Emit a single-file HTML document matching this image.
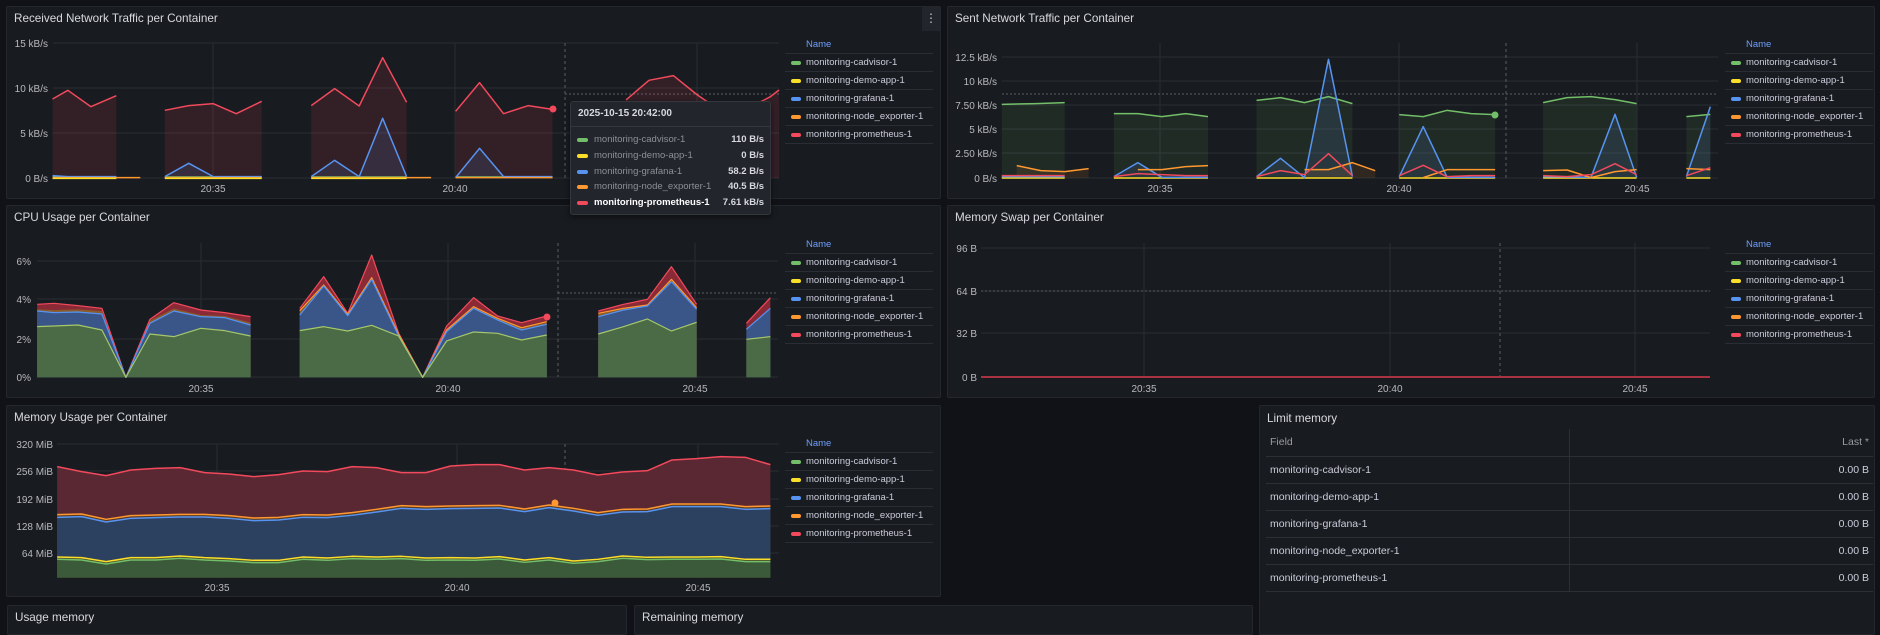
<!DOCTYPE html>
<html><head><meta charset="utf-8">
<style>
*{box-sizing:border-box;margin:0;padding:0}
html,body{width:1880px;height:623px;overflow:hidden;background:#111217;font-family:"Liberation Sans",sans-serif;color:#ccccdc}
.p{position:absolute;background:#181b1f;border:1px solid #24272d;border-radius:2px}
.t{position:absolute;left:7px;top:5px;font-size:11.7px;color:#d8d9e0}
.lg{position:absolute;width:148px;font-size:9.5px}
.lg .h{height:18px;line-height:18px;padding-left:21px;color:#6e9fff;border-bottom:1px solid #2a2d33}
.lg .r{height:18px;line-height:18px;padding-left:21px;border-bottom:1px solid #2a2d33;position:relative;color:#ccccdc}
.lg .r i{position:absolute;left:6px;top:7px;width:10px;height:4px;border-radius:2px}
.g{background:#73bf69}.y{background:#fade2a}.b{background:#5794f2}.o{background:#ff9830}.rd{background:#f2495c}
svg{position:absolute;left:0;top:0}
.tt{position:absolute;left:570px;top:101px;width:201px;height:114px;background:#22252b;border:1px solid #34373e;border-radius:3px;font-size:9.5px;box-shadow:0 2px 6px rgba(0,0,0,.5)}
.tt .hd{height:25px;line-height:23px;padding-left:7px;font-weight:bold;font-size:10px;color:#d8d9e0;border-bottom:1px solid #34373e}
.tt .r{position:absolute;left:0;width:100%;height:14px;line-height:14px}
.tt .r i{position:absolute;left:6px;top:5px;width:11px;height:4px;border-radius:2px}
.tt .r span{position:absolute;left:23px;color:#8e8f98}
.tt .r b{position:absolute;right:6px;font-weight:bold;color:#d8d9e0}
table{position:absolute;left:6px;top:23px;width:607px;border-collapse:collapse;font-size:10.5px;table-layout:fixed}
td{height:27px;border-bottom:1px solid #2c2f35;padding:0 4px;color:#ccccdc}
td:first-child{width:303px}
td+td{text-align:right;border-left:1px solid #2c2f35}
</style></head><body>

<div class="p" style="left:6px;top:6px;width:935px;height:193px"><div class="t">Received Network Traffic per Container</div>
<div style="position:absolute;right:0;top:0;width:18px;height:24px;background:#22252b;color:#ccc;font-size:12px;text-align:center;line-height:22px">⋮</div></div>
<div class="p" style="left:947px;top:6px;width:928px;height:193px"><div class="t">Sent Network Traffic per Container</div></div>
<div class="p" style="left:6px;top:205px;width:935px;height:193px"><div class="t">CPU Usage per Container</div></div>
<div class="p" style="left:947px;top:205px;width:928px;height:193px"><div class="t">Memory Swap per Container</div></div>
<div class="p" style="left:6px;top:405px;width:935px;height:192px"><div class="t">Memory Usage per Container</div></div>
<div class="p" style="left:1259px;top:405px;width:616px;height:230px"><div class="t" style="top:6px">Limit memory</div>
<table>
<tr><td style="color:#9a9ba3">Field</td><td style="color:#9a9ba3">Last *</td></tr>
<tr><td>monitoring-cadvisor-1</td><td>0.00 B</td></tr>
<tr><td>monitoring-demo-app-1</td><td>0.00 B</td></tr>
<tr><td>monitoring-grafana-1</td><td>0.00 B</td></tr>
<tr><td>monitoring-node_exporter-1</td><td>0.00 B</td></tr>
<tr><td>monitoring-prometheus-1</td><td>0.00 B</td></tr>
</table></div>
<div class="p" style="left:7px;top:605px;width:620px;height:30px"><div class="t" style="top:5px">Usage memory</div></div>
<div class="p" style="left:634px;top:605px;width:619px;height:30px"><div class="t" style="top:5px">Remaining memory</div></div>

<!-- legends -->
<div class="lg" style="left:785px;top:36px"><div class="h">Name</div><div class="r"><i class="g"></i>monitoring-cadvisor-1</div><div class="r"><i class="y"></i>monitoring-demo-app-1</div><div class="r"><i class="b"></i>monitoring-grafana-1</div><div class="r"><i class="o"></i>monitoring-node_exporter-1</div><div class="r"><i class="rd"></i>monitoring-prometheus-1</div></div>
<div class="lg" style="left:1725px;top:36px"><div class="h">Name</div><div class="r"><i class="g"></i>monitoring-cadvisor-1</div><div class="r"><i class="y"></i>monitoring-demo-app-1</div><div class="r"><i class="b"></i>monitoring-grafana-1</div><div class="r"><i class="o"></i>monitoring-node_exporter-1</div><div class="r"><i class="rd"></i>monitoring-prometheus-1</div></div>
<div class="lg" style="left:785px;top:236px"><div class="h">Name</div><div class="r"><i class="g"></i>monitoring-cadvisor-1</div><div class="r"><i class="y"></i>monitoring-demo-app-1</div><div class="r"><i class="b"></i>monitoring-grafana-1</div><div class="r"><i class="o"></i>monitoring-node_exporter-1</div><div class="r"><i class="rd"></i>monitoring-prometheus-1</div></div>
<div class="lg" style="left:1725px;top:236px"><div class="h">Name</div><div class="r"><i class="g"></i>monitoring-cadvisor-1</div><div class="r"><i class="y"></i>monitoring-demo-app-1</div><div class="r"><i class="b"></i>monitoring-grafana-1</div><div class="r"><i class="o"></i>monitoring-node_exporter-1</div><div class="r"><i class="rd"></i>monitoring-prometheus-1</div></div>
<div class="lg" style="left:785px;top:435px"><div class="h">Name</div><div class="r"><i class="g"></i>monitoring-cadvisor-1</div><div class="r"><i class="y"></i>monitoring-demo-app-1</div><div class="r"><i class="b"></i>monitoring-grafana-1</div><div class="r"><i class="o"></i>monitoring-node_exporter-1</div><div class="r"><i class="rd"></i>monitoring-prometheus-1</div></div>

<svg width="1880" height="623" font-family="Liberation Sans, sans-serif" font-size="10" fill="#b8b9c0">
<g stroke="#2a2d33" stroke-width="1">
<path d="M53 43H779M53 88H779M53 133H779M53 178H779M213 43V178M455 43V178M697 43V178"/>
<path d="M1002 57H1718M1002 81H1718M1002 105H1718M1002 129H1718M1002 153H1718M1002 178H1718M1160 43V178M1399 43V178M1637 43V178"/>
<path d="M37 261H778M37 299H778M37 339H778M37 377H778M201 243V377M448 243V377M695 243V377"/>
<path d="M981 248H1710M981 291H1710M981 333H1710M981 377H1710M1144 243V377M1390 243V377M1635 243V377"/>
<path d="M57 444H779M57 471H779M57 499H779M57 526H779M57 553H779M217 444V578M457 444V578M698 444V578"/>
</g>
<g stroke="#5a5c63" stroke-width="1" stroke-dasharray="3,3">
<path d="M565 43V178M1506 43V178M558 243V377M1500 243V377M565 444V578"/>
<path d="M565 94H779M1002 94H1718M558 293H778M981 291H1710M565 492H770" stroke-dasharray="2,2"/>
</g>

<g text-anchor="end">
<text x="48" y="47">15 kB/s</text><text x="48" y="92">10 kB/s</text><text x="48" y="137">5 kB/s</text><text x="48" y="182">0 B/s</text>
<text x="997" y="61">12.5 kB/s</text><text x="997" y="85">10 kB/s</text><text x="997" y="109">7.50 kB/s</text><text x="997" y="133">5 kB/s</text><text x="997" y="157">2.50 kB/s</text><text x="997" y="182">0 B/s</text>
<text x="31" y="265">6%</text><text x="31" y="303">4%</text><text x="31" y="343">2%</text><text x="31" y="381">0%</text>
<text x="977" y="252">96 B</text><text x="977" y="295">64 B</text><text x="977" y="337">32 B</text><text x="977" y="381">0 B</text>
<text x="53" y="448">320 MiB</text><text x="53" y="475">256 MiB</text><text x="53" y="503">192 MiB</text><text x="53" y="530">128 MiB</text><text x="53" y="557">64 MiB</text>
</g>
<g text-anchor="middle">
<text x="213" y="192">20:35</text><text x="455" y="192">20:40</text>
<text x="1160" y="192">20:35</text><text x="1399" y="192">20:40</text><text x="1637" y="192">20:45</text>
<text x="201" y="392">20:35</text><text x="448" y="392">20:40</text><text x="695" y="392">20:45</text>
<text x="1144" y="392">20:35</text><text x="1390" y="392">20:40</text><text x="1635" y="392">20:45</text>
<text x="217" y="591">20:35</text><text x="457" y="591">20:40</text><text x="698" y="591">20:45</text>
</g>

<!-- RECEIVED -->
<g transform="scale(0.5102,0.3333)" stroke-width="1.5" fill="none" stroke-linejoin="round">
<g fill="rgba(242,73,92,0.12)" stroke="none">
<polygon points="103,297 133,271 178,320 228,287 228,534 103,534"/>
<polygon points="323,331 370,317 418,311 463,341 513,304 513,534 323,534"/>
<polygon points="610,317 656,266 704,318 750,173 797,307 797,534 610,534"/>
<polygon points="893,334 940,248 987,341 1035,317 1083,328 1083,534 893,534"/>
<polygon points="1227,300 1272,241 1320,227 1367,285 1420,340 1460,330 1510,290 1527,270 1527,534 1227,534"/>
</g>
<g fill="rgba(87,148,242,0.12)" stroke="none">
<polygon points="323,530 370,490 418,530"/><polygon points="610,530 656,481 704,530 750,355 797,530"/><polygon points="893,533 940,445 987,530"/>
</g>
<g stroke="#f2495c">
<polyline vector-effect="non-scaling-stroke" points="103,297 133,271 178,320 228,287"/>
<polyline vector-effect="non-scaling-stroke" points="323,331 370,317 418,311 463,341 513,304"/>
<polyline vector-effect="non-scaling-stroke" points="610,317 656,266 704,318 750,173 797,307"/>
<polyline vector-effect="non-scaling-stroke" points="893,334 940,248 987,341 1035,317 1083,328"/>
<polyline vector-effect="non-scaling-stroke" points="1227,300 1272,241 1320,227 1367,285 1420,340 1460,330 1510,290 1527,270"/>
</g>
<g stroke="#73bf69"><polyline vector-effect="non-scaling-stroke" points="103,531 228,531"/><polyline vector-effect="non-scaling-stroke" points="323,531 513,531"/><polyline vector-effect="non-scaling-stroke" points="610,531 797,531"/><polyline vector-effect="non-scaling-stroke" points="893,531 1083,531"/></g>
<g stroke="#5794f2">
<polyline vector-effect="non-scaling-stroke" points="103,527 133,530 228,530"/>
<polyline vector-effect="non-scaling-stroke" points="323,530 370,490 418,530 513,530"/>
<polyline vector-effect="non-scaling-stroke" points="610,530 656,481 704,530 750,355 797,530"/>
<polyline vector-effect="non-scaling-stroke" points="893,533 940,445 987,530 1083,530"/>
</g>
<g stroke="#ff9830"><polyline vector-effect="non-scaling-stroke" points="103,533 275,533"/><polyline vector-effect="non-scaling-stroke" points="323,533 513,533"/><polyline vector-effect="non-scaling-stroke" points="610,533 845,533"/><polyline vector-effect="non-scaling-stroke" points="893,533 1083,533"/></g>
<g stroke="#fade2a"><polyline vector-effect="non-scaling-stroke" points="103,535 228,535"/><polyline vector-effect="non-scaling-stroke" points="323,535 513,535"/><polyline vector-effect="non-scaling-stroke" points="610,535 797,535"/></g>
</g>
<circle cx="553" cy="109" r="3.5" fill="#f2495c"/>

<!-- SENT -->
<g transform="translate(940,0) scale(0.5995,0.3333)" fill="none" stroke-width="1.5" stroke-linejoin="round">
<g fill="rgba(115,191,105,0.1)" stroke="none">
<polygon points="103,313 160,311 208,308 208,534 103,534"/>
<polygon points="290,341 330,341 370,350 410,341 447,350 447,534 290,534"/>
<polygon points="528,301 568,293 608,308 648,290 688,311 688,534 528,534"/>
<polygon points="766,344 806,350 846,331 886,341 926,344 926,534 766,534"/>
<polygon points="1006,308 1046,293 1086,290 1126,299 1162,311 1162,534 1006,534"/>
<polygon points="1245,350 1285,343 1285,534 1245,534"/>
</g>
<g fill="rgba(87,148,242,0.12)" stroke="none">
<polygon points="290,530 330,488 370,532"/><polygon points="528,530 568,475 608,533 648,178 688,530"/><polygon points="766,530 806,380 846,532"/><polygon points="1086,532 1126,343 1162,532"/><polygon points="1245,530 1285,320 1285,534"/>
</g>
<g fill="rgba(255,152,48,0.1)" stroke="none">
<polygon points="128,497 168,512 208,515 248,506 248,534 128,534"/><polygon points="608,509 648,509 688,488 726,512 726,534 608,534"/>
</g>
<g stroke="#73bf69">
<polyline vector-effect="non-scaling-stroke" points="103,313 160,311 208,308"/>
<polyline vector-effect="non-scaling-stroke" points="290,341 330,341 370,350 410,341 447,350"/>
<polyline vector-effect="non-scaling-stroke" points="528,301 568,293 608,308 648,290 688,311"/>
<polyline vector-effect="non-scaling-stroke" points="766,344 806,350 846,331 886,341 926,344"/>
<polyline vector-effect="non-scaling-stroke" points="1006,308 1046,293 1086,290 1126,299 1162,311"/>
<polyline vector-effect="non-scaling-stroke" points="1245,350 1285,343"/>
</g>
<g stroke="#fade2a">
<polyline vector-effect="non-scaling-stroke" points="103,534 208,534"/><polyline vector-effect="non-scaling-stroke" points="290,534 447,534"/><polyline vector-effect="non-scaling-stroke" points="528,534 688,534"/><polyline vector-effect="non-scaling-stroke" points="766,534 926,534"/><polyline vector-effect="non-scaling-stroke" points="1006,534 1162,534"/><polyline vector-effect="non-scaling-stroke" points="1245,534 1285,534"/>
</g>
<g stroke="#5794f2">
<polyline vector-effect="non-scaling-stroke" points="103,530 208,530"/>
<polyline vector-effect="non-scaling-stroke" points="290,530 330,488 370,532 447,532"/>
<polyline vector-effect="non-scaling-stroke" points="528,530 568,475 608,533 648,178 688,530"/>
<polyline vector-effect="non-scaling-stroke" points="766,530 806,380 846,532 926,532"/>
<polyline vector-effect="non-scaling-stroke" points="1006,530 1086,532 1126,343 1162,532"/>
<polyline vector-effect="non-scaling-stroke" points="1245,530 1285,320"/>
</g>
<g stroke="#ff9830">
<polyline vector-effect="non-scaling-stroke" points="128,497 168,512 208,515 248,506"/>
<polyline vector-effect="non-scaling-stroke" points="330,509 370,509 410,500 447,497"/>
<polyline vector-effect="non-scaling-stroke" points="608,509 648,509 688,488 726,512"/>
<polyline vector-effect="non-scaling-stroke" points="806,533 846,509 926,509"/>
<polyline vector-effect="non-scaling-stroke" points="1006,512 1046,510 1086,533 1126,515 1162,509"/>
<polyline vector-effect="non-scaling-stroke" points="1245,506 1285,509"/>
</g>
<g stroke="#f2495c">
<polyline vector-effect="non-scaling-stroke" points="103,527 208,527"/>
<polyline vector-effect="non-scaling-stroke" points="290,530 330,521 370,524 410,527 447,527"/>
<polyline vector-effect="non-scaling-stroke" points="528,530 568,512 608,524 648,461 688,527"/>
<polyline vector-effect="non-scaling-stroke" points="766,527 806,496 846,530 886,527 926,527"/>
<polyline vector-effect="non-scaling-stroke" points="1006,527 1046,530 1086,524 1126,491 1162,524"/>
<polyline vector-effect="non-scaling-stroke" points="1245,527 1285,503"/>
</g>
</g>
<circle cx="1495" cy="115" r="3.5" fill="#73bf69"/>

<!-- CPU -->
<g transform="translate(0,200) scale(0.5995,0.3333)" stroke-linejoin="round">
<g stroke="none">
<polygon fill="#8a2a36" points="62,313 90,310 130,317 170,325 210,532 250,358 290,308 335,330 375,338 418,350 418,532 62,532"/>
<polygon fill="#8a5a2a" points="62,328 90,330 130,328 170,333 210,532 250,362 290,326 335,345 375,348 418,368 418,532 62,532"/>
<polygon fill="#3a5588" points="62,333 90,338 130,336 170,342 210,532 250,370 290,333 335,350 375,353 418,375 418,532 62,532"/>
<polygon fill="#4a6b45" points="62,380 90,378 130,375 170,390 210,532 250,402 290,410 335,385 375,392 418,408 418,532 62,532"/>
<polygon fill="#8a2a36" points="500,325 540,230 580,340 620,165 665,400 705,532 745,378 790,293 830,348 870,368 912,348 912,532 500,532"/>
<polygon fill="#8a5a2a" points="500,332 540,255 580,343 620,233 665,403 705,532 745,390 790,320 830,355 870,383 912,365 912,532 500,532"/>
<polygon fill="#3a5588" points="500,345 540,258 580,347 620,238 665,408 705,532 745,395 790,325 830,360 870,390 912,373 912,532 500,532"/>
<polygon fill="#4a6b45" points="500,392 540,380 580,393 620,376 665,408 705,532 745,423 790,396 830,400 870,420 912,405 912,532 500,532"/>
<polygon fill="#8a2a36" points="998,333 1040,313 1080,298 1120,200 1162,313 1162,532 998,532"/>
<polygon fill="#8a5a2a" points="998,340 1040,325 1080,315 1120,238 1162,323 1162,532 998,532"/>
<polygon fill="#3a5588" points="998,350 1040,330 1080,318 1120,245 1162,328 1162,532 998,532"/>
<polygon fill="#4a6b45" points="998,402 1040,380 1080,357 1120,393 1162,367 1162,532 998,532"/>
<polygon fill="#8a2a36" points="1245,370 1285,293 1285,532 1245,532"/>
<polygon fill="#3a5588" points="1245,388 1285,325 1285,532 1245,532"/>
<polygon fill="#4a6b45" points="1245,418 1285,410 1285,532 1245,532"/>
</g>
<g fill="none" stroke-width="1.2">
<polyline stroke="#f2495c" vector-effect="non-scaling-stroke" points="62,313 90,310 130,317 170,325 210,532 250,358 290,308 335,330 375,338 418,350"/>
<polyline stroke="#5794f2" vector-effect="non-scaling-stroke" points="62,333 90,338 130,336 170,342 210,532 250,370 290,333 335,350 375,353 418,375"/>
<polyline stroke="#a6c76a" vector-effect="non-scaling-stroke" points="62,380 90,378 130,375 170,390 210,532 250,402 290,410 335,385 375,392 418,408"/>
<polyline stroke="#f2495c" vector-effect="non-scaling-stroke" points="500,325 540,230 580,340 620,165 665,400 705,532 745,378 790,293 830,348 870,368 912,348"/>
<polyline stroke="#ff9830" vector-effect="non-scaling-stroke" points="500,332 540,255 580,343 620,233 665,403 705,532 745,390 790,320 830,355 870,383 912,365"/>
<polyline stroke="#5794f2" vector-effect="non-scaling-stroke" points="500,345 540,258 580,347 620,238 665,408 705,532 745,395 790,325 830,360 870,390 912,373"/>
<polyline stroke="#a6c76a" vector-effect="non-scaling-stroke" points="500,392 540,380 580,393 620,376 665,408 705,532 745,423 790,396 830,400 870,420 912,405"/>
<polyline stroke="#f2495c" vector-effect="non-scaling-stroke" points="998,333 1040,313 1080,298 1120,200 1162,313"/>
<polyline stroke="#ff9830" vector-effect="non-scaling-stroke" points="998,340 1040,325 1080,315 1120,238 1162,323"/>
<polyline stroke="#5794f2" vector-effect="non-scaling-stroke" points="998,350 1040,330 1080,318 1120,245 1162,328"/>
<polyline stroke="#a6c76a" vector-effect="non-scaling-stroke" points="998,402 1040,380 1080,357 1120,393 1162,367"/>
<polyline stroke="#f2495c" vector-effect="non-scaling-stroke" points="1245,370 1285,293"/>
<polyline stroke="#5794f2" vector-effect="non-scaling-stroke" points="1245,388 1285,325"/>
<polyline stroke="#a6c76a" vector-effect="non-scaling-stroke" points="1245,418 1285,410"/>
</g>
</g>
<circle cx="547" cy="317" r="3.5" fill="#f2495c"/>

<path d="M981 377H1710" stroke="#a8323f" stroke-width="2"/>

<!-- MEMORY -->
<g transform="translate(0,340) scale(0.5102,0.3333)" stroke-linejoin="round">
<polygon fill="#5a2832" points="112,380 160,395 208,407 256,390 305,385 353,383 401,398 449,402 497,410 546,404 594,393 642,395 690,380 738,383 787,398 835,398 883,378 931,374 979,374 1028,390 1076,383 1124,390 1172,405 1220,396 1269,392 1317,360 1365,356 1413,350 1461,352 1510,374 1510,713 112,713"/>
<polygon fill="#5a3c22" points="112,524 160,522 208,538 256,527 305,525 353,523 401,523 449,527 497,534 546,532 594,524 642,525 690,518 738,508 787,497 835,500 883,498 931,497 979,496 1028,507 1076,495 1124,505 1172,518 1220,508 1269,507 1317,492 1365,492 1413,492 1461,500 1510,498 1510,713 112,713"/>
<polygon fill="#2c4060" points="112,532 160,530 208,546 256,535 305,533 353,531 401,531 449,535 497,542 546,540 594,532 642,533 690,526 738,516 787,505 835,508 883,506 931,505 979,504 1028,515 1076,503 1124,513 1172,526 1220,516 1269,515 1317,500 1365,500 1413,500 1461,508 1510,506 1510,713 112,713"/>
<polygon fill="#4f4d25" points="112,651 160,653 208,665 256,653 305,653 353,648 401,653 449,656 497,661 546,661 594,651 642,654 690,649 738,651 787,649 835,654 883,653 931,654 979,650 1028,660 1076,653 1124,663 1172,658 1220,648 1269,652 1317,651 1365,651 1413,650 1461,658 1510,658 1510,713 112,713"/>
<polygon fill="#3b5a3a" points="112,658 160,660 208,672 256,660 305,660 353,655 401,660 449,663 497,668 546,668 594,658 642,661 690,656 738,658 787,656 835,661 883,660 931,661 979,657 1028,667 1076,660 1124,670 1172,665 1220,655 1269,659 1317,658 1365,658 1413,657 1461,665 1510,665 1510,713 112,713"/>
<g fill="none" stroke-width="1.5">
<polyline stroke="#f2495c" vector-effect="non-scaling-stroke" points="112,380 160,395 208,407 256,390 305,385 353,383 401,398 449,402 497,410 546,404 594,393 642,395 690,380 738,383 787,398 835,398 883,378 931,374 979,374 1028,390 1076,383 1124,390 1172,405 1220,396 1269,392 1317,360 1365,356 1413,350 1461,352 1510,374"/>
<polyline stroke="#ff9830" vector-effect="non-scaling-stroke" points="112,524 160,522 208,538 256,527 305,525 353,523 401,523 449,527 497,534 546,532 594,524 642,525 690,518 738,508 787,497 835,500 883,498 931,497 979,496 1028,507 1076,495 1124,505 1172,518 1220,508 1269,507 1317,492 1365,492 1413,492 1461,500 1510,498"/>
<polyline stroke="#5794f2" vector-effect="non-scaling-stroke" points="112,532 160,530 208,546 256,535 305,533 353,531 401,531 449,535 497,542 546,540 594,532 642,533 690,526 738,516 787,505 835,508 883,506 931,505 979,504 1028,515 1076,503 1124,513 1172,526 1220,516 1269,515 1317,500 1365,500 1413,500 1461,508 1510,506"/>
<polyline stroke="#fade2a" vector-effect="non-scaling-stroke" points="112,651 160,653 208,665 256,653 305,653 353,648 401,653 449,656 497,661 546,661 594,651 642,654 690,649 738,651 787,649 835,654 883,653 931,654 979,650 1028,660 1076,653 1124,663 1172,658 1220,648 1269,652 1317,651 1365,651 1413,650 1461,658 1510,658"/>
<polyline stroke="#73bf69" vector-effect="non-scaling-stroke" points="112,658 160,660 208,672 256,660 305,660 353,655 401,660 449,663 497,668 546,668 594,658 642,661 690,656 738,658 787,656 835,661 883,660 931,661 979,657 1028,667 1076,660 1124,670 1172,665 1220,655 1269,659 1317,658 1365,658 1413,657 1461,665 1510,665"/>
</g>
</g>
<circle cx="555" cy="503" r="3.5" fill="#ff9830"/>
</svg>

<div class="tt">
<div class="hd">2025-10-15 20:42:00</div>
<div class="r" style="top:31px"><i class="g"></i><span>monitoring-cadvisor-1</span><b>110 B/s</b></div>
<div class="r" style="top:47px"><i class="y"></i><span>monitoring-demo-app-1</span><b>0 B/s</b></div>
<div class="r" style="top:63px"><i class="b"></i><span>monitoring-grafana-1</span><b>58.2 B/s</b></div>
<div class="r" style="top:78px"><i class="o"></i><span>monitoring-node_exporter-1</span><b>40.5 B/s</b></div>
<div class="r" style="top:94px"><i class="rd"></i><span style="color:#fff;font-weight:bold">monitoring-prometheus-1</span><b>7.61 kB/s</b></div>
</div>
</body></html>
